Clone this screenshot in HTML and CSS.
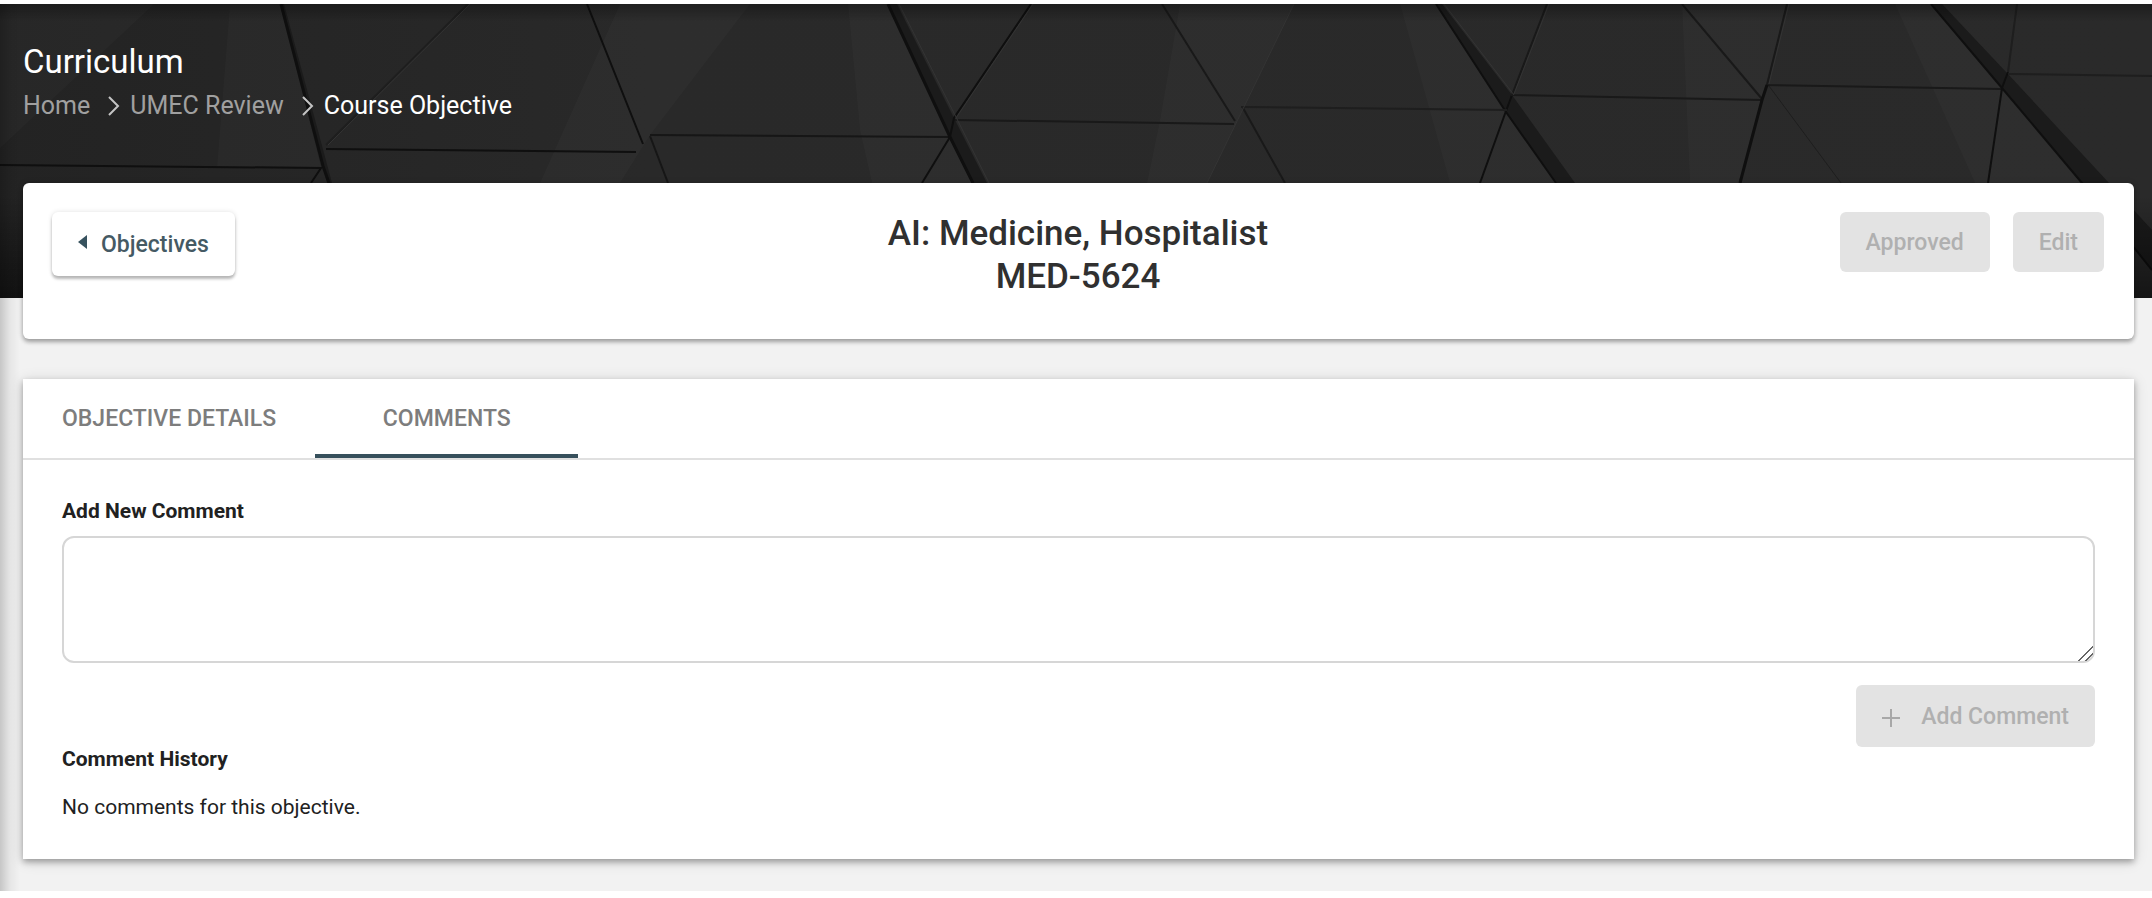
FILE: index.html
```html
<!DOCTYPE html>
<html lang="en">
<head>
  <meta charset="UTF-8">
  <title>Curriculum - Course Objective</title>
  <meta name="viewport" content="width=device-width, initial-scale=1.0">
  <link rel="stylesheet" href="styles.css">
</head>
<body>
  <div class="page">
    <header class="banner">
      <!-- Dark panel artwork behind the heading -->
      <svg class="banner-art" viewBox="0 4 2152 294" preserveAspectRatio="xMidYMin slice" aria-hidden="true">
        <defs>
          <linearGradient id="base" x1="0" x2="1" y1="0" y2="0">
            <stop offset="0" stop-color="#232323"/>
            <stop offset="0.3" stop-color="#292929"/>
            <stop offset="1" stop-color="#2a2a2a"/>
          </linearGradient>
          <linearGradient id="fade" x1="0" x2="0" y1="0" y2="1">
            <stop offset="0" stop-color="#000" stop-opacity="0.3"/>
            <stop offset="0.06" stop-color="#000" stop-opacity="0"/>
            <stop offset="0.65" stop-color="#000" stop-opacity="0"/>
            <stop offset="1" stop-color="#000" stop-opacity="0.5"/>
          </linearGradient>
        </defs>
        <rect y="4" width="2152" height="294" fill="url(#base)"/>
        <g fill="#fff" fill-opacity="0.02">
          <path d="M0 4H154L0 148z"/>
          <path d="M230 4H281L321 167H217z"/>
          <path d="M620 4H750L650 135L620 183H540z"/>
          <path d="M848 4H888L973 183H872L860 130z"/>
          <path d="M1180 4H1294L1207 183H1147L1160 120z"/>
          <path d="M1400 4H1436L1556 183H1450z"/>
          <path d="M1682 4H1787L1740 183H1690z"/>
          <path d="M1895 4H1931L2082 183H1975z"/>
        </g>
        <g fill="#1b1b1b">
          <path d="M281 4H284L332 183H327z"/>
          <path d="M888 4H897L955 120L987 183H973L950 137z"/>
          <path d="M1436 4H1442L1512 95L1575 183H1556L1506 112z"/>
          <path d="M1931 4H1942L2007 73L2109 183L2152 230V270L2082 183L2002 88z"/>
        </g>
        <g fill="none" stroke="#0f0f0f" stroke-width="2">
          <path stroke-width="3" d="M281 4L323 166L329 183"/>
          <path d="M587 4L643 144M326 149L636 152M0 165L321 168L311 183"/>
          <path stroke="#161616" d="M650 135L950 137M650 136L668 183"/>
          <path stroke-width="3" d="M888 4L950 137L973 183"/>
          <path d="M1031 4L954 118L950 137L922 183"/>
          <path stroke="#191919" d="M955 120L1234 124M1162 4L1235 121M1243 108L1285 183"/>
          <path d="M1436 4L1506 112L1556 183M1512 95L1506 111L1480 183"/>
          <path stroke="#191919" d="M1547 4L1512 95L1762 100M1682 4L1762 99M1787 4L1767 85L2001 89"/>
          <path stroke-width="3" d="M1767 85L1762 100L1740 183"/>
          <path d="M1931 4L2002 88L2082 183L2152 270M2008 72L2002 88L1988 183"/>
        </g>
        <g fill="none" stroke="#1e1e1e">
          <path stroke-width="2" d="M468 4L326 145M1241 107L1507 110M2017 4L2008 72M2008 74L2152 76"/>
          <path d="M1769 86L1841 183"/>
        </g>
        <path fill="none" stroke="#343434" d="M470 4L328 145M899 4L957 119L989 183M1444 4L1514 95M1294 4L1207 183M956 118L1033 4M1549 4L1514 94M1789 4L1769 84"/>
        <rect y="4" width="2152" height="294" fill="url(#fade)"/>
      </svg>
      <h1>Curriculum</h1>
      <nav class="breadcrumb" aria-label="Breadcrumb">
        <a href="#">Home</a>
        <svg viewBox="0 0 12 20" aria-hidden="true"><path d="M1 1L10 10L1 19"/></svg>
        <a href="#">UMEC Review</a>
        <svg viewBox="0 0 12 20" aria-hidden="true"><path d="M1 1L10 10L1 19"/></svg>
        <span>Course Objective</span>
      </nav>
    </header>

    <main>
      <!-- Course heading -->
      <section class="card course-card">
        <div class="course-left">
          <button type="button" class="btn btn-back">
            <svg viewBox="0 0 9 18" aria-hidden="true"><path d="M9 0V14L0 7z"/></svg>
            Objectives
          </button>
        </div>
        <h2>AI: Medicine, Hospitalist<br>MED-5624</h2>
        <div class="course-actions">
          <button type="button" class="btn" disabled>Approved</button>
          <button type="button" class="btn" disabled>Edit</button>
        </div>
      </section>

      <!-- Tabs and comments -->
      <section class="card detail-card">
        <div class="tabs" role="tablist">
          <button type="button" class="tab" role="tab" aria-selected="false">OBJECTIVE DETAILS</button>
          <button type="button" class="tab active" role="tab" aria-selected="true">COMMENTS</button>
        </div>
        <div class="comments">
          <label for="new-comment">Add New Comment</label>
          <textarea id="new-comment"></textarea>
          <button type="button" class="btn btn-add" disabled>
            <svg viewBox="0 0 18 22" aria-hidden="true"><path d="M9 4V22M0 13H18"/></svg>
            Add Comment
          </button>
          <h3>Comment History</h3>
          <p>No comments for this objective.</p>
        </div>
      </section>
    </main>
  </div>
</body>
</html>
```

FILE: styles.css
```css
* { box-sizing: border-box; }
body {
  font-family: Roboto, sans-serif;
  background: #fff;
  margin: 0;
  padding: 4px 0 6px;
  color: #212121;
}
h1, h2, h3, p { margin: 0; }
.page {
  position: relative;
  background: #f2f2f2;
  padding-bottom: 32px;
}
/* shadow cast by the side menu */
.page::after {
  content: "";
  position: absolute;
  top: 0;
  bottom: 0;
  left: 0;
  width: 20px;
  background: linear-gradient(to right, rgba(0, 0, 0, 0.18), rgba(0, 0, 0, 0.05) 50%, transparent);
  pointer-events: none;
}
.banner {
  position: relative;
  height: 294px;
  padding: 38px 23px;
  background: #2a2a2a;
  color: #fff;
  overflow: hidden;
}
.banner-art {
  position: absolute;
  top: 0;
  left: 0;
  width: 100%;
  height: 100%;
}
.banner h1 {
  position: relative;
  font-size: 33px;
  line-height: 40px;
  font-weight: 400;
}
.breadcrumb {
  position: relative;
  display: flex;
  align-items: center;
  gap: 10px;
  margin-top: 8px;
  font-size: 25px;
  line-height: 32px;
}
.breadcrumb a { color: #a0a0a0; text-decoration: none; }
.breadcrumb svg {
  width: 12px;
  height: 20px;
  margin-left: 8px;
  fill: none;
  stroke: #c4c4c4;
  stroke-width: 2;
}
main {
  position: relative;
  display: flex;
  flex-direction: column;
  gap: 40px;
  margin: -115px 18px 0 23px;
}
.card {
  background: #fff;
  box-shadow: 0 3px 4px rgba(0, 0, 0, 0.3), 0 0 6px rgba(0, 0, 0, 0.14);
}
.detail-card { box-shadow: 0 3px 6px rgba(0, 0, 0, 0.3), 0 2px 14px rgba(0, 0, 0, 0.14); }
.course-card {
  display: grid;
  grid-template-columns: 1fr auto 1fr;
  align-items: start;
  padding: 29px 30px 41px 29px;
  border-radius: 6px;
}
.course-card h2 {
  color: #303030;
  font-size: 35px;
  line-height: 43px;
  font-weight: 500;
  text-align: center;
}
.course-actions {
  display: flex;
  justify-content: flex-end;
  gap: 23px;
}
.btn {
  display: inline-flex;
  align-items: center;
  justify-content: center;
  height: 60px;
  padding: 0 26px;
  border: none;
  border-radius: 6px;
  background: #e3e3e3;
  font-family: inherit;
  font-size: 23px;
  font-weight: 500;
  cursor: pointer;
}
.btn:disabled { color: #b0b0b0; cursor: default; }
.btn-back {
  height: 64px;
  gap: 14px;
  background: #fff;
  color: #455a64;
  box-shadow: 0 3px 3px rgba(0, 0, 0, 0.25), 0 0 5px rgba(0, 0, 0, 0.12);
}
.btn-back svg { width: 9px; height: 18px; fill: #37525e; }
.tabs {
  display: flex;
  border-bottom: 2px solid #e0e0e0;
}
.tab {
  min-width: 263px;
  height: 79px;
  padding: 4px 39px 0;
  border: none;
  border-bottom: 4px solid transparent;
  background: none;
  color: #7d7d7d;
  font-family: inherit;
  font-size: 23px;
  font-weight: 500;
  cursor: pointer;
}
.tab.active { border-color: #37505c; }
.comments {
  display: flex;
  flex-direction: column;
  padding: 36px 39px 37px;
  font-size: 21px;
  line-height: 30px;
}
.comments label, .comments h3 { font-size: 21px; font-weight: 700; }
.comments h3 { line-height: 24px; }
.comments textarea {
  width: 100%;
  height: 127px;
  margin-top: 10px;
  padding: 12px;
  border: 2px solid #d6d6d6;
  border-radius: 12px;
  font: inherit;
}
.comments textarea::-webkit-resizer {
  background: linear-gradient(135deg, transparent 49%, #666 49%, #666 55%, transparent 55%, transparent 72%, #666 72%, #666 78%, transparent 78%);
}
.btn-add {
  align-self: flex-end;
  height: 62px;
  margin-top: 22px;
  gap: 21px;
}
.btn-add svg { width: 18px; height: 22px; fill: none; stroke: #a8a8a8; stroke-width: 2; }
.comments p { margin-top: 21px; }
```
